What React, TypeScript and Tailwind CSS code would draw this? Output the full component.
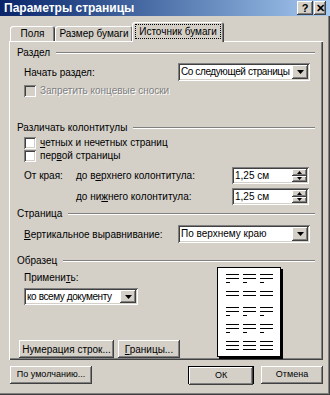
import React from "react";

const raised =
  "shadow-[inset_-1px_-1px_#404040,inset_1px_1px_#ffffff,inset_-2px_-2px_#808080,inset_2px_2px_#D4D0C8]";
const sunken =
  "shadow-[inset_1px_1px_#808080,inset_-1px_-1px_#ffffff,inset_2px_2px_#404040,inset_-2px_-2px_#D4D0C8]";

function DownArrow() {
  return (
    <svg width="7" height="4" viewBox="0 0 7 4">
      <path d="M0 0h7L3.5 4z" fill="#000" />
    </svg>
  );
}

function DropBtn() {
  return (
    <div className={`w-[16px] h-full shrink-0 bg-[#D4D0C8] ${raised} flex items-center justify-center`}>
      <DownArrow />
    </div>
  );
}

function Group({ label }: { label: string }) {
  return (
    <div className="flex items-center h-[12px] pl-[8px] pr-[8px]">
      <span className="leading-[12px]">{label}</span>
      <div className="flex-1 ml-[6px] h-[2px] border-t border-t-[#808080] border-b border-b-white" />
    </div>
  );
}

function Check({ label, disabled }: { label: React.ReactNode; disabled?: boolean }) {
  return (
    <div className="flex items-center h-[13px] pl-[15px]">
      <div className={`w-[12px] h-[12px] ${sunken} ${disabled ? "bg-[#D4D0C8]" : "bg-white"}`} />
      <span
        className={`ml-[4px] leading-[12px] ${disabled ? "text-[#808080] [text-shadow:1px_1px_#ffffff]" : ""}`}
      >
        {label}
      </span>
    </div>
  );
}

function Spin({ value }: { value: string }) {
  return (
    <div className={`w-[77px] h-[17px] bg-white ${sunken} p-[2px] flex`}>
      <span className="flex-1 pl-[1px] leading-[13px]">{value}</span>
      <div className="w-[15px] flex flex-col">
        <div className={`flex-1 bg-[#D4D0C8] ${raised} flex items-center justify-center`}>
          <svg width="5" height="3" viewBox="0 0 5 3">
            <path d="M0 3h5L2.5 0z" fill="#000" />
          </svg>
        </div>
        <div className={`flex-1 bg-[#D4D0C8] ${raised} flex items-center justify-center`}>
          <svg width="5" height="3" viewBox="0 0 5 3">
            <path d="M0 0h5L2.5 3z" fill="#000" />
          </svg>
        </div>
      </div>
    </div>
  );
}

function Preview() {
  const cols = [9, 26, 43];
  const groups: { y: number; lines: number[] }[] = [
    { y: 7, lines: [13, 13, 4] },
    { y: 24, lines: [13, 13] },
    { y: 40, lines: [13, 13, 4] },
    { y: 57, lines: [13, 13, 4] },
    { y: 74, lines: [13, 13, 13] },
  ];
  return (
    <div className="w-[66px] h-[92px] relative">
      <div className="absolute left-[2px] top-[2px] w-[64px] h-[90px] bg-black" />
      <div className="absolute left-0 top-0 w-[64px] h-[90px] bg-white border border-black">
        <svg width="62" height="88" viewBox="0 0 62 88" className="block">
          {groups.map((g, gi) =>
            cols.map((cx, ci) =>
              g.lines.map((w, li) => (
                <rect key={`${gi}-${ci}-${li}`} x={cx - 1} y={g.y + li * 4 - 1} width={w} height={1} fill="#000" />
              ))
            )
          )}
        </svg>
      </div>
    </div>
  );
}

function Btn({ children, cls }: { children: React.ReactNode; cls: string }) {
  return (
    <div className={`h-[18px] bg-[#D4D0C8] ${raised} flex items-center justify-center ${cls}`}>{children}</div>
  );
}

export default function App() {
  return (
    <div className="w-[330px] h-[395px] bg-[#D4D0C8] flex flex-col whitespace-nowrap font-['Liberation_Sans',Arial,sans-serif] text-[10px] text-black shadow-[inset_-1px_-1px_#404040,inset_-2px_-2px_#808080] overflow-hidden">
      {/* Title bar */}
      <div className="h-[16px] bg-linear-to-r from-[#0A246A] to-[#A6CAF0] flex items-center pl-[4px] pr-[4px]">
        <span className="text-white font-bold text-[12px] leading-[16px]">Параметры страницы</span>
        <div className="ml-auto flex">
          <div className={`w-[16px] h-[14px] bg-[#D4D0C8] ${raised} flex items-center justify-center font-bold text-[11px] leading-[14px]`}>
            ?
          </div>
          <div className={`ml-[1px] w-[12px] h-[14px] bg-[#D4D0C8] ${raised} flex items-center justify-center font-bold text-[11px] leading-[14px]`}>
            ✕
          </div>
        </div>
      </div>

      {/* Tabs */}
      <div className="mt-[6px] h-[19px] flex items-end pl-[10px]">
        <div className="w-[45px] h-[15px] rounded-t-[3px] shadow-[inset_1px_1px_#ffffff,inset_-1px_0_#404040,inset_-2px_0_#808080] flex items-center justify-center leading-[12px]">
          Поля
        </div>
        <div className="w-[78px] h-[15px] rounded-t-[3px] shadow-[inset_1px_1px_#ffffff,inset_-1px_0_#404040,inset_-2px_0_#808080] flex items-center justify-center leading-[12px]">
          Размер бумаги
        </div>
        <div className="relative z-10 ml-[-1px] mb-[-1px] w-[92px] h-[20px] bg-[#D4D0C8] rounded-t-[3px] shadow-[inset_1px_1px_#ffffff,inset_-1px_0_#404040,inset_-2px_0_#808080] flex items-start justify-center pt-[2px]">
          <span className="border border-dotted border-black px-[3px] leading-[13px]">Источник бумаги</span>
        </div>
      </div>

      {/* Panel */}
      <div className="ml-[9px] w-[314px] h-[319px] shadow-[inset_1px_1px_#ffffff,inset_-1px_-1px_#404040,inset_-2px_-2px_#808080] pt-[6px] flex flex-col">
        <Group label="Раздел" />
        <div className="mt-[4px] h-[18px] flex items-center pl-[15px]">
          <span className="w-[154px]">Начать раздел:</span>
          <div className={`w-[132px] h-[18px] bg-white ${sunken} p-[2px] flex items-center`}>
            <span className="flex-1 pl-[1px] leading-[14px] tracking-[-0.4px]">Со следующей страницы</span>
            <DropBtn />
          </div>
        </div>
        <div className="mt-[3px]">
          <Check label="Запретить концевые сноски" disabled />
        </div>

        <div className="mt-[25px]">
          <Group label="Различать колонтитулы" />
        </div>
        <div className="mt-[2px]">
          <Check
            label={
              <>
                <span className="underline">ч</span>етных и нечетных страниц
              </>
            }
          />
        </div>
        <Check
          label={
            <>
              пер<span className="underline">в</span>ой страницы
            </>
          }
        />
        <div className="mt-[5px] h-[17px] flex items-center pl-[15px]">
          <span className="w-[52px]">От края:</span>
          <span className="w-[156px]">
            до в<span className="underline">е</span>рхнего колонтитула:
          </span>
          <Spin value="1,25 см" />
        </div>
        <div className="mt-[4px] h-[17px] flex items-center pl-[15px]">
          <span className="w-[52px]" />
          <span className="w-[156px]">
            до ни<span className="underline">ж</span>него колонтитула:
          </span>
          <Spin value="1,25 см" />
        </div>

        <div className="mt-[3px]">
          <Group label="Страница" />
        </div>
        <div className="mt-[5px] h-[18px] flex items-center pl-[15px]">
          <span className="w-[154px]">
            <span className="underline">В</span>ертикальное выравнивание:
          </span>
          <div className={`w-[132px] h-[18px] bg-white ${sunken} p-[2px] flex items-center`}>
            <span className="flex-1 pl-[1px] leading-[14px]">По верхнему краю</span>
            <DropBtn />
          </div>
        </div>

        <div className="mt-[12px]">
          <Group label="Образец" />
        </div>
        <div className="flex pl-[10px]">
          <div className="w-[198px] flex flex-col">
            <span className="mt-[5px] ml-[5px] leading-[12px]">
              Примени<span className="underline">т</span>ь:
            </span>
            <div className={`mt-[4px] ml-[5px] w-[114px] h-[17px] bg-white ${sunken} p-[2px] flex items-center`}>
              <span className="flex-1 pl-[1px] leading-[13px] tracking-[-0.4px]">ко всему документу</span>
              <DropBtn />
            </div>
            <div className="mt-[35px] flex gap-[4px]">
              <Btn cls="w-[95px]">Нумерация строк...</Btn>
              <Btn cls="w-[62px]">
                <span>
                  <span className="underline">Г</span>раницы...
                </span>
              </Btn>
            </div>
          </div>
          <Preview />
        </div>
      </div>

      {/* Bottom buttons */}
      <div className="mt-[6px] flex items-center pl-[10px] text-[9px]">
        <Btn cls="w-[82px]">По умолчанию...</Btn>
        <div className="ml-[96px] w-[66px] h-[18px] border border-black">
          <Btn cls="w-full h-[16px]">ОК</Btn>
        </div>
        <Btn cls="ml-[7px] w-[62px]">Отмена</Btn>
      </div>
    </div>
  );
}
